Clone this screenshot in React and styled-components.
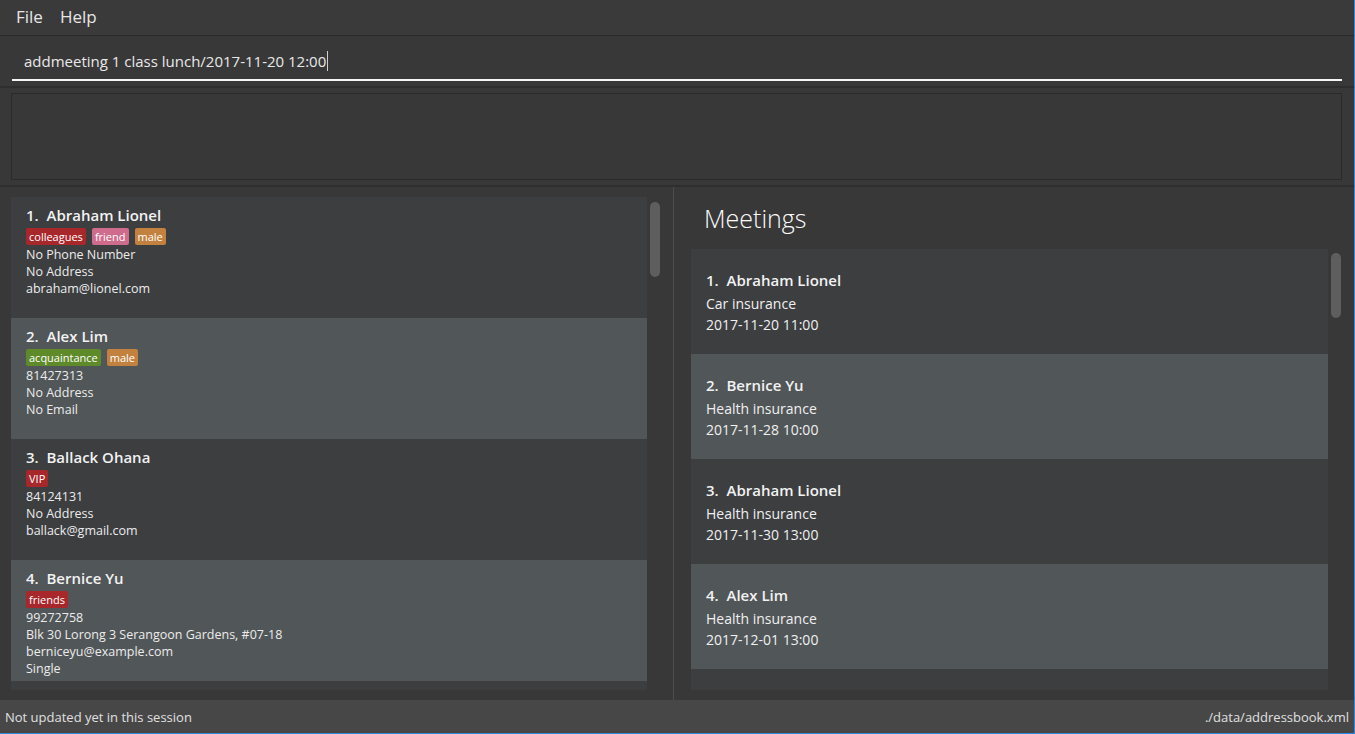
import React from 'react';
import styled, { createGlobalStyle } from 'styled-components';

const persons = [
  {
    id: 1,
    name: 'Abraham Lionel',
    tags: [
      { label: 'colleagues', color: '#a8272b' },
      { label: 'friend', color: '#cf6b8c' },
      { label: 'male', color: '#c2813e' },
    ],
    lines: ['No Phone Number', 'No Address', 'abraham@lionel.com'],
  },
  {
    id: 2,
    name: 'Alex Lim',
    tags: [
      { label: 'acquaintance', color: '#5f8a29' },
      { label: 'male', color: '#c2813e' },
    ],
    lines: ['81427313', 'No Address', 'No Email'],
  },
  {
    id: 3,
    name: 'Ballack Ohana',
    tags: [{ label: 'VIP', color: '#a8272b' }],
    lines: ['84124131', 'No Address', 'ballack@gmail.com'],
  },
  {
    id: 4,
    name: 'Bernice Yu',
    tags: [{ label: 'friends', color: '#a8272b' }],
    lines: ['99272758', 'Blk 30 Lorong 3 Serangoon Gardens, #07-18', 'berniceyu@example.com', 'Single'],
  },
  { id: 5, name: '', tags: [], lines: [] },
];

const meetings = [
  { id: 1, name: 'Abraham Lionel', what: 'Car insurance', when: '2017-11-20 11:00' },
  { id: 2, name: 'Bernice Yu', what: 'Health insurance', when: '2017-11-28 10:00' },
  { id: 3, name: 'Abraham Lionel', what: 'Health insurance', when: '2017-11-30 13:00' },
  { id: 4, name: 'Alex Lim', what: 'Health insurance', when: '2017-12-01 13:00' },
  { id: 5, name: '', what: '', when: '' },
];

function App() {
  return (
    <>
      <GlobalStyle />
      <Window>
        <MenuBar>
          <MenuItem>File</MenuItem>
          <MenuItem>Help</MenuItem>
        </MenuBar>
        <CommandPane>
          <CommandField>
            addmeeting 1 class lunch/2017-11-20 12:00<Caret />
          </CommandField>
        </CommandPane>
        <ResultPane>
          <ResultBox />
        </ResultPane>
        <Split>
          <ListPanel>
            <ListViewport>
              {persons.map((p, i) => (
                <PersonCard key={p.id} $alt={i % 2 === 1}>
                  {p.name && (
                    <>
                      <CardTitle>
                        {p.id}.&nbsp;&nbsp;{p.name}
                      </CardTitle>
                      <TagRow>
                        {p.tags.map((t) => (
                          <Tag key={t.label} $color={t.color}>
                            {t.label}
                          </Tag>
                        ))}
                      </TagRow>
                      {p.lines.map((l) => (
                        <InfoLine key={l}>{l}</InfoLine>
                      ))}
                    </>
                  )}
                </PersonCard>
              ))}
            </ListViewport>
            <ScrollTrack>
              <Thumb $top={5} $height={75} />
            </ScrollTrack>
          </ListPanel>
          <Divider />
          <MeetingPanel>
            <MeetingHeading>Meetings</MeetingHeading>
            <MeetingBody>
              <MeetingViewport>
                {meetings.map((m, i) => (
                  <MeetingCard key={m.id} $alt={i % 2 === 1}>
                    {m.name && (
                      <>
                        <MeetingTitle>
                          {m.id}.&nbsp;&nbsp;{m.name}
                        </MeetingTitle>
                        <MeetingLine>{m.what}</MeetingLine>
                        <MeetingLine>{m.when}</MeetingLine>
                      </>
                    )}
                  </MeetingCard>
                ))}
              </MeetingViewport>
              <ScrollTrack>
                <Thumb $top={4} $height={65} />
              </ScrollTrack>
            </MeetingBody>
          </MeetingPanel>
        </Split>
        <StatusBar>
          <span>Not updated yet in this session</span>
          <span>./data/addressbook.xml</span>
        </StatusBar>
      </Window>
    </>
  );
}

export default App;

const GlobalStyle = createGlobalStyle`
  html, body {
    margin: 0;
    padding: 0;
    background: #383838;
  }
  body {
    font-family: "Open Sans", "Noto Sans", sans-serif;
    color: #f0f0f0;
  }
  * {
    box-sizing: border-box;
  }
`;

const Window = styled.div`
  width: 1355px;
  height: 734px;
  display: flex;
  flex-direction: column;
  background: #383838;
  border-right: 1px solid #2c8be0;
  border-bottom: 1px solid #2c8be0;
  overflow: hidden;
`;

const MenuBar = styled.div`
  height: 36px;
  display: flex;
  align-items: center;
  gap: 17px;
  padding: 0 0 2px 16px;
  background: #3a3a3a;
  border-bottom: 1px solid #2b2b2b;
`;

const MenuItem = styled.span`
  font-size: 17px;
  color: #e6e6e6;
`;

const CommandPane = styled.div`
  height: 52px;
  padding: 10px 12px 0 12px;
  border-bottom: 2px solid #2e2e2e;
`;

const CommandField = styled.div`
  height: 35px;
  display: flex;
  align-items: center;
  padding: 0 0 4px 12px;
  font-size: 15px;
  color: #e8e8e8;
  border-bottom: 2px solid #f5f5f5;
  white-space: nowrap;
`;

const Caret = styled.span`
  display: inline-block;
  width: 1px;
  height: 20px;
  margin-left: 1px;
  background: #d0d0d0;
`;

const ResultPane = styled.div`
  height: 99px;
  padding: 5px 12px 5px 11px;
  border-bottom: 2px solid #2e2e2e;
`;

const ResultBox = styled.div`
  height: 100%;
  border: 1px solid #2a2a2a;
  background: #383838;
`;

const Split = styled.div`
  flex: 1;
  display: flex;
  min-height: 0;
`;

const ListPanel = styled.div`
  width: 673px;
  display: flex;
  padding: 10px 12px 10px 11px;
`;

const ListViewport = styled.div`
  width: 637px;
  overflow: hidden;
  display: flex;
  flex-direction: column;
`;

const ScrollTrack = styled.div`
  position: relative;
  width: 14px;
  padding: 0 3px;
`;

const Thumb = styled.div`
  position: absolute;
  left: 3px;
  top: ${(p) => p.$top}px;
  width: 10px;
  height: ${(p) => p.$height}px;
  border-radius: 5px;
  background: #5e5e5e;
`;

const PersonCard = styled.div`
  flex: 0 0 121px;
  padding: 8px 15px 0 15px;
  background: ${(p) => (p.$alt ? '#515658' : '#3c3e40')};
`;

const CardTitle = styled.div`
  font-size: 15px;
  font-weight: 600;
  line-height: 20px;
  color: #f2f2f2;
`;

const TagRow = styled.div`
  display: flex;
  gap: 6px;
  margin-top: 3px;
  margin-bottom: 1px;
`;

const Tag = styled.span`
  font-size: 11px;
  line-height: 17px;
  padding: 0 3px;
  border-radius: 2px;
  color: #ffffff;
  background: ${(p) => p.$color};
`;

const InfoLine = styled.div`
  font-size: 12.5px;
  line-height: 17px;
  color: #ececec;
`;

const Divider = styled.div`
  width: 1px;
  background: #4c4c4c;
`;

const MeetingPanel = styled.div`
  flex: 1;
  display: flex;
  flex-direction: column;
  padding: 0 12px 10px 17px;
  min-width: 0;
`;

const MeetingHeading = styled.div`
  height: 62px;
  display: flex;
  align-items: center;
  padding: 0 0 0 13px;
  font-size: 25px;
  font-weight: 300;
  color: #fbfbfb;
`;

const MeetingBody = styled.div`
  flex: 1;
  display: flex;
  min-height: 0;
`;

const MeetingViewport = styled.div`
  width: 637px;
  overflow: hidden;
  display: flex;
  flex-direction: column;
`;

const MeetingCard = styled.div`
  flex: 0 0 105px;
  padding: 21px 15px 0 15px;
  background: ${(p) => (p.$alt ? '#515658' : '#3c3e40')};
`;

const MeetingTitle = styled(CardTitle)`
  margin-bottom: 3px;
`;

const MeetingLine = styled.div`
  font-size: 14px;
  line-height: 21px;
  color: #f0f0f0;
`;

const StatusBar = styled.div`
  height: 33px;
  display: flex;
  align-items: center;
  justify-content: space-between;
  padding: 0 5px 0 5px;
  background: #474747;
  font-size: 13px;
  color: #e0e0e0;
`;
